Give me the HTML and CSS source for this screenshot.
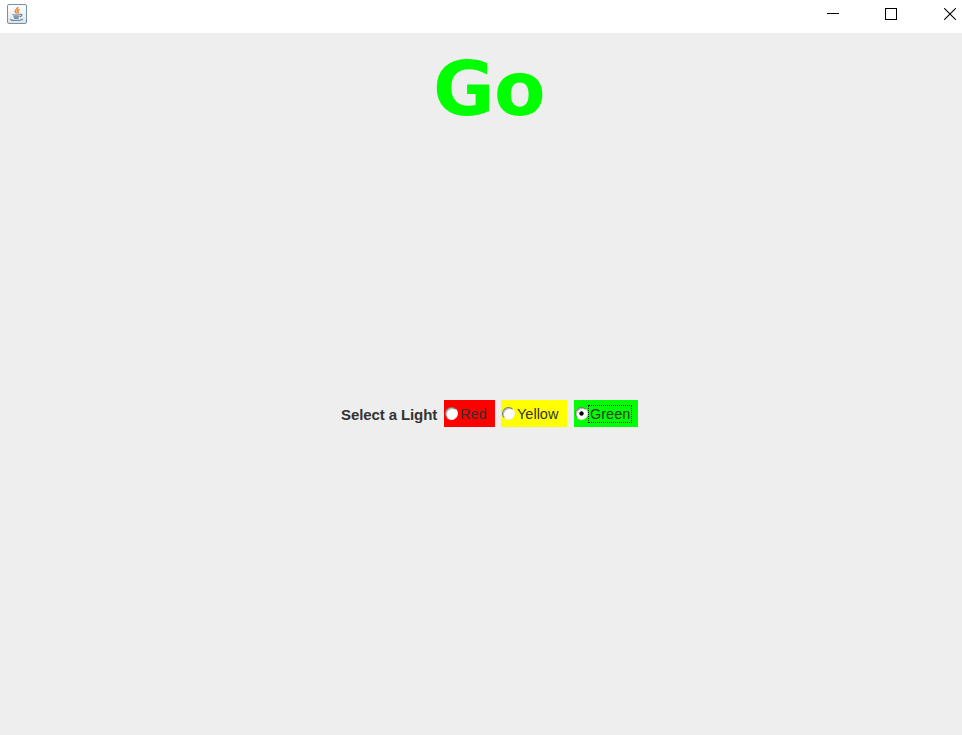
FILE: index.html
```
<!DOCTYPE html>
<html lang="en">
<head>
<meta charset="utf-8">
<title>Traffic Light</title>
<link rel="stylesheet" href="styles.css">
</head>
<body>
<header class="titlebar">
  <svg class="app-icon" width="20" height="20" viewBox="0 0 20 20">
    <defs><linearGradient id="tile" x2="0" y2="1"><stop offset="0" stop-color="#fff"/><stop offset="1" stop-color="#dce3e8"/></linearGradient></defs>
    <rect x=".5" y=".5" width="19" height="19" rx="1.5" fill="url(#tile)" stroke="#7492a6"/>
    <path d="M10.700 3c.8 2-3.200 2.700-2.400 4.600.2.700 1 1.100 1.200 2M12.600 5.600c-1.800.9-2.600 1.500-1.700 2.500.5.600.2 1.200-.3 1.600" fill="none" stroke="#f08a3c" stroke-width="1.700"/>
    <path d="M5.500 10.500c1.500.8 5.500.8 7.500 0M6.500 12.300c1.500.7 4 .7 5.700 0M7 13.900c1.500.6 3.200.6 4.700 0M13 10.400c3-.6 2.200 2-.2 2.500M3.500 15c-1 1.900 9 2 12.500.2" fill="none" stroke="#6685a0" stroke-width="1.200"/>
  </svg>
  <div class="controls">
    <svg width="12" height="12" viewBox="0 0 12 12" shape-rendering="crispEdges"><path d="M0 5.500h12" stroke="#000"/></svg>
    <svg width="12" height="12" viewBox="0 0 12 12" shape-rendering="crispEdges"><path d="M.5.500h11v11H.5z" fill="none" stroke="#000"/></svg>
    <svg width="12" height="12" viewBox="0 0 12 12"><path d="M.2.200l11.600 11.600M11.800.200L.2 11.800" stroke="#000" stroke-width="1.100"/></svg>
  </div>
</header>
<main class="content">
  <h1 class="signal">Go</h1>
  <div class="lights">
    <span class="prompt">Select a Light</span>
    <label class="light red"><input type="radio" name="light"><span class="name">Red</span></label>
    <label class="light yellow"><input type="radio" name="light"><span class="name">Yellow</span></label>
    <label class="light green"><input type="radio" name="light" checked><span class="name">Green</span></label>
  </div>
</main>
</body>
</html>
```

FILE: styles.css
```
* { box-sizing: border-box; }
body {
  margin: 0;
  height: 735px;
  overflow: hidden;
  display: flex;
  flex-direction: column;
  background: #eee;
  color: #333;
  font-family: "Liberation Sans", Arial, sans-serif;
  font-size: 14.5px;
}
.titlebar {
  height: 33px;
  flex: none;
  display: flex;
  justify-content: space-between;
  align-items: flex-start;
  padding: 4px 6px 0 7px;
  background: #fff;
}
.app-icon { display: block; }
.controls { display: flex; padding-top: 4px; }
.controls svg { display: block; }
.controls svg:nth-child(2) { margin: 0 47px 0 46px; }
.content {
  flex: 1;
  display: flex;
  flex-direction: column;
  padding-left: 16px;
}
.signal {
  margin: 0;
  height: 367px;
  padding-top: 12px;
  text-align: center;
  color: #0f0;
  font: bold 75px/88px "DejaVu Sans", Verdana, sans-serif;
  letter-spacing: -0.5px;
}
.lights {
  height: 27px;
  display: flex;
  padding-left: 325px;
}
.prompt {
  width: 103px;
  flex: none;
  font-size: 15px;
  font-weight: bold;
  line-height: 29px;
  white-space: nowrap;
  letter-spacing: -0.1px;
}
.light {
  height: 27px;
  display: flex;
  align-items: flex-start;
  padding: 5px 0 0 1px;
}
.red { width: 51px; background: #f00; margin-right: 6px; }
.yellow { width: 66px; background: #ff0; margin-right: 7px; }
.green { width: 64px; background: #0f0; }
.light input {
  appearance: none;
  width: 13px;
  height: 13px;
  flex: none;
  margin: 2px 0 0;
  border: 1.5px solid;
  border-color: #777 #eee #eee #777;
  border-radius: 50%;
  background: #fff;
  box-shadow: inset 1px 1px 0 #bbb;
}
.light input:checked {
  background: radial-gradient(circle, #000 1.8px, #fff 2.5px);
}
.name {
  height: 18px;
  line-height: 18px;
  padding: 0 2px;
}
.green .name {
  width: 44px;
  line-height: 16px;
  padding: 0 1px;
  border: 1px dotted #000;
}
```
